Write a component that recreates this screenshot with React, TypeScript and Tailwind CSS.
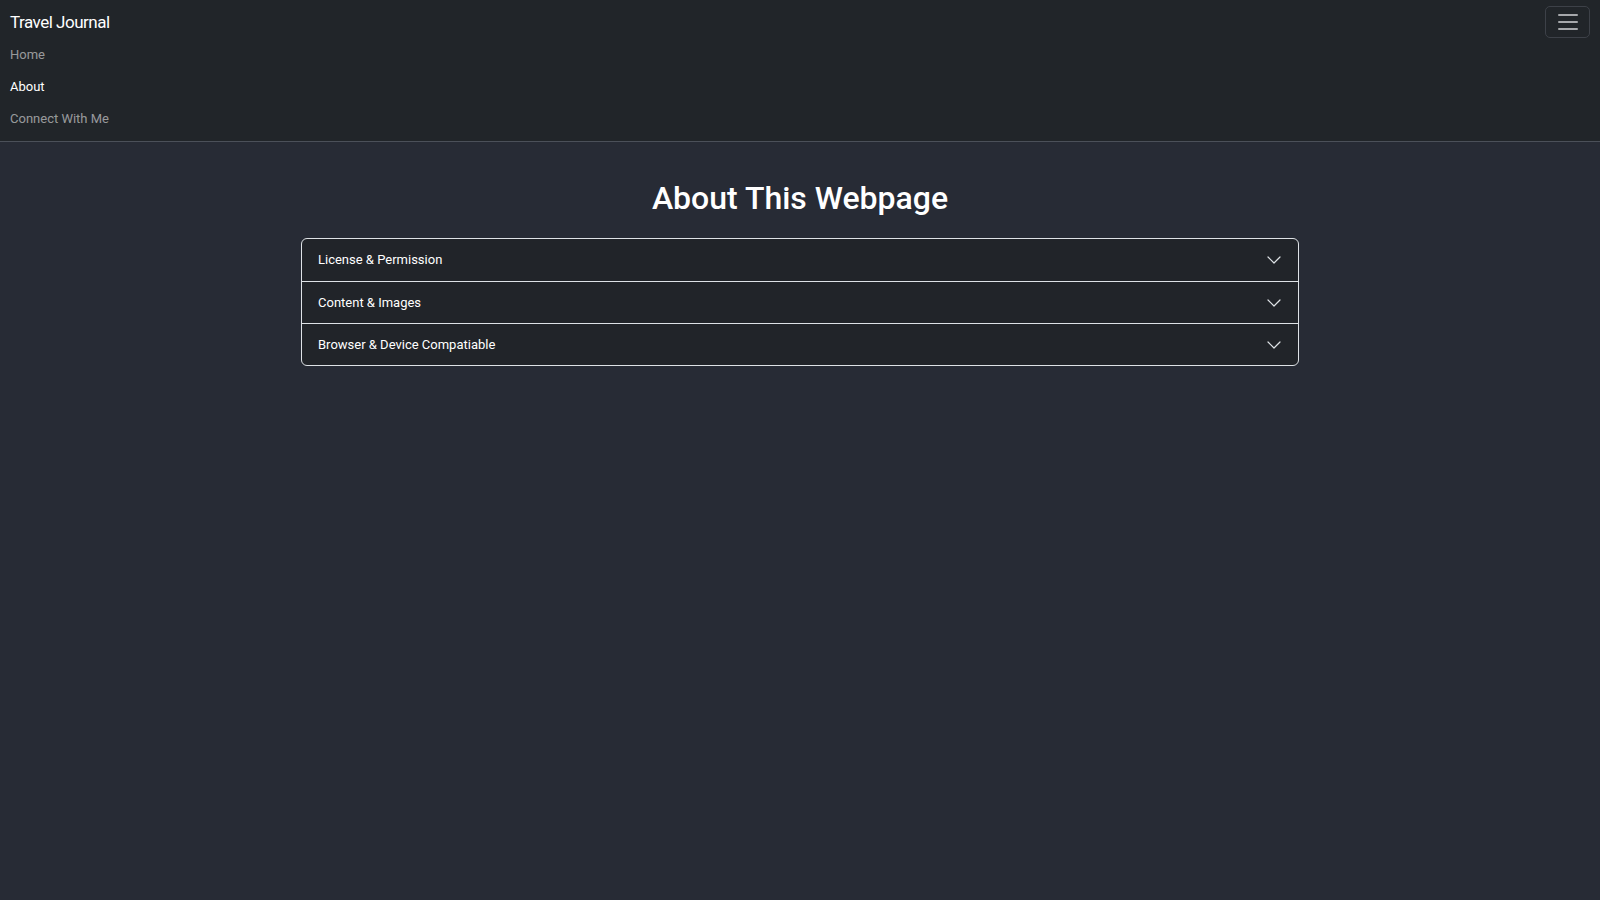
import React from "react";

const items = ["License & Permission", "Content & Images", "Browser & Device Compatiable"];

function Chevron() {
  return (
    <svg width="16" height="16" viewBox="0 0 16 16" fill="none" className="shrink-0">
      <path d="M2 5 L8 11 L14 5" stroke="#dee2e6" strokeWidth="1.2" strokeLinecap="round" strokeLinejoin="round" />
    </svg>
  );
}

export default function App() {
  return (
    <div className="min-h-[900px] bg-[#272b35] text-white" style={{ fontFamily: "Roboto, 'Liberation Sans', sans-serif" }}>
      <nav className="relative bg-[#212529] border-b border-[#4b5059] px-[10px] pt-[8px] pb-[6px]">
        <div className="text-[17px] leading-[28px] tracking-[-0.5px] text-white">Travel Journal</div>
        <div className="mt-[3px] flex flex-col text-[13px] leading-[32px]">
          <span className="text-[rgba(255,255,255,0.55)]">Home</span>
          <span className="text-white">About</span>
          <span className="text-[rgba(255,255,255,0.55)]">Connect With Me</span>
        </div>
        <button className="absolute right-[10px] top-[6px] flex h-[32px] w-[45px] flex-col items-center justify-center gap-[5px] rounded-[5px] border border-[#3d4148]">
          <span className="block h-[2px] w-[20px] rounded bg-[#a6a8ab]" />
          <span className="block h-[2px] w-[20px] rounded bg-[#a6a8ab]" />
          <span className="block h-[2px] w-[20px] rounded bg-[#a6a8ab]" />
        </button>
      </nav>
      <main className="flex flex-col items-center pt-[38px]">
        <h1 className="text-[32px] leading-[36px] font-medium text-white">About This Webpage</h1>
        <div className="mt-[22px] w-[998px] overflow-hidden rounded-[6px] border border-[#dee2e6] bg-[#212429]">
          {items.map((t, i) => (
            <div
              key={t}
              className={`flex h-[42px] items-center justify-between pl-[16px] pr-[16px] text-[13px] font-normal text-white ${i > 0 ? "border-t border-[#dee2e6]" : ""}`}
            >
              <span>{t}</span>
              <Chevron />
            </div>
          ))}
        </div>
      </main>
    </div>
  );
}
